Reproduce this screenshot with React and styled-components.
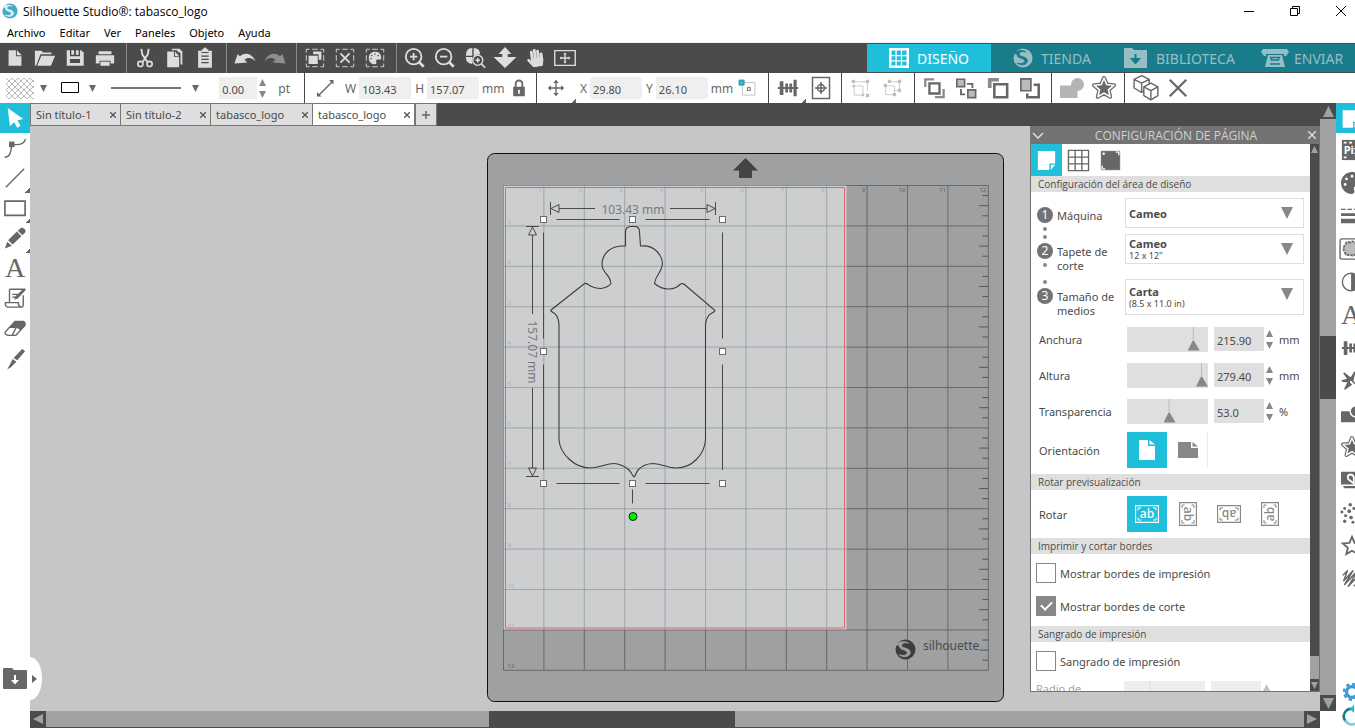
import styled, { createGlobalStyle } from "styled-components";
import { FaHandPaper, FaPalette } from "react-icons/fa";

const GlobalStyle = createGlobalStyle`
  * {
    box-sizing: border-box;
  }
  body {
    margin: 0;
    overflow: hidden;
    background: #fff;
    color: #4a4b4a;
    font-family: "Noto Sans", "Open Sans", sans-serif;
    font-size: 11px;
  }
  button, input, select {
    font: inherit;
    color: inherit;
    border: 0;
    border-radius: 0;
    margin: 0;
    padding: 0;
    background: none;
  }
  svg {
    display: block;
    flex: none;
  }
`;

/* ---------- icons ---------- */

const line = { fill: "none", stroke: "currentColor", strokeWidth: 1.5 };
const thin = { fill: "none", stroke: "currentColor", strokeWidth: 1 };
const dashBox = (
  <path d="M2.5 6V2.5H6M9 2.5h6M18 2.5h3.5V6M21.5 9v6M21.5 18v3.5H18M15 21.5H9M6 21.5H2.5V18M2.5 15V9" {...thin} />
);
const starPath = "M12 2l2.8 6.6 7.2.6-5.5 4.7 1.7 7L12 17.2l-6.2 3.7 1.7-7L2 9.2l7.2-.6z";

const ICONS = {
  file: <path d="M5 3.500h8V10h6v10.500H5zM14 3.500l5.500 5.500H14z" />,
  folder: <path d="M1 20.500V4h7l2 2h9v2H7L2.500 20zM8 9.500H23L18.500 20.500H3.500z" />,
  save: <path d="M3 3.500h3.500v6.500h11V3.500h1L21.500 6v14.500H3zM8 3.500h8v5h-3v-5h-2v5H8zM6.500 13v4.500h11V13z" fillRule="evenodd" />,
  print: (
    <>
      <path d="M5 4.500h14v3.500H5zM2 9h20v9h-4v-3H6v3H2z" />
      <path d="M7 16h10v4.500H7z" />
    </>
  ),
  cut: (
    <>
      <path d="M8 2l1 6 6 9M16 2l-1 6-6 9" {...line} strokeWidth="2" />
      <circle cx="7" cy="18.500" r="2.800" {...line} strokeWidth="1.800" />
      <circle cx="17" cy="18.500" r="2.800" {...line} strokeWidth="1.800" />
    </>
  ),
  copy: (
    <>
      <path d="M8.500 2H17l3 3v14h-2V6h-2l-2-2.500H8.500z" />
      <path d="M3.500 5h7.500v6h5.500v11h-13zM12 5l4.500 5H12z" />
    </>
  ),
  paste: (
    <>
      <path d="M4.500 4h4V2.500H10a2 2 0 0 1 4 0h1.500V4h4v18.500h-15z" />
      <path d="M8 6h8M8 10h8M8 13.500h8M8 17h8" fill="none" stroke="#4a4b4a" strokeWidth="1.300" />
    </>
  ),
  undo: <path d="M.5 18L4 7.500l2.500 2.500C12 5 20 7 23.500 15.500 19 11 14.500 11.500 11.500 14l3 3z" />,
  redo: <path d="M23.500 18L20 7.500l-2.500 2.500C12 5 4 7 .5 15.500 5 11 9.500 11.500 12.500 14l-3 3z" />,
  selectAll: (
    <>
      {dashBox}
      <path d="M10 5h9v9h-3V8h-6zM5 9.500h10v9H5z" />
    </>
  ),
  deselect: (
    <>
      {dashBox}
      <path d="M7 7l10 10M17 7L7 17" {...line} strokeWidth="2" />
    </>
  ),
  colorSelect: (
    <>
      {dashBox}
      <g transform="translate(5 5)">
        <FaPalette size={14} />
      </g>
    </>
  ),
  zoomIn: (
    <>
      <circle cx="10.500" cy="10.500" r="8.500" {...line} strokeWidth="2" />
      <path d="M6.500 10.500h8M10.500 6.500v8" {...line} strokeWidth="2" />
      <path d="M16.500 16.500l5 5" {...line} strokeWidth="3" />
    </>
  ),
  zoomOut: (
    <>
      <circle cx="10.500" cy="10.500" r="8.500" {...line} strokeWidth="2" />
      <path d="M6.500 10.500h8" {...line} strokeWidth="2" />
      <path d="M16.500 16.500l5 5" {...line} strokeWidth="3" />
    </>
  ),
  zoomArea: (
    <>
      <path d="M9 1v8.500H2Q2 1 9 1zM10.500 1q7 0 7 7-5 0-7 2zM2 11h7v7.500Q2 18 2 11z" />
      <circle cx="15" cy="14.500" r="5.500" {...line} />
      <path d="M12.500 14.500h5M15 12v5M19 18.500l4 4" {...line} strokeWidth="1.800" />
    </>
  ),
  zoomDrag: <path d="M12 0l7 7.500h-4V11h9.500L12 23-.5 11H9V7.500H5z" />,
  hand: (
    <g transform="translate(2 2) rotate(-8 10 10)">
      <FaHandPaper size={20} />
    </g>
  ),
  fit: (
    <>
      <path d="M.8 4h22.400v16H.8z" {...line} />
      <path d="M12 7v10M7 12h10" {...line} />
      <path d="M12 6l2 2h-4zM12 18l2-2h-4zM6 12l2-2v4zM18 12l-2-2v4z" />
    </>
  ),
  grid: (
    <>
      <path d="M1.500 1.500h21v21h-21z" {...line} strokeWidth="3" />
      <path d="M2 9h20M2 15.500h20M8.500 2v20M15 2v20" {...line} />
    </>
  ),
  library: (
    <>
      <path d="M0 2h8l2 2h13v18H0z" />
      <path d="M11.500 8v8M8 13l3.500 4 3.500-4z" fill="#187c8b" stroke="#187c8b" strokeWidth="2" />
    </>
  ),
  cutter: (
    <>
      <path d="M1 3h24l2 3-3 4h-2V8H4v2H2L-1 6z" />
      <path d="M6 9h14l3 12H3z" />
      <path d="M8.500 11.500h9l-1 2.500h-7zM8 18h10" fill="none" stroke="#187c8b" strokeWidth="1.300" />
    </>
  ),
  lineArrow: (
    <>
      <path d="M5 20L20 5" {...line} />
      <path d="M20.500 4v4.500l-4.500-4.500zM4 20.500V16l4.500 4.500z" />
    </>
  ),
  lock: (
    <>
      <path d="M8 11V7a4 4 0 0 1 8 0v4" {...line} strokeWidth="2.200" />
      <path d="M5 10.500h14V22H5zM11 14v5h2v-5z" fillRule="evenodd" />
    </>
  ),
  move: (
    <>
      <path d="M12 5v14M5 12h14" {...line} />
      <path d="M12 3l3 3.500H9zM12 21l3-3.500H9zM3 12l3.500-3v6zM21 12l-3.500-3v6z" />
    </>
  ),
  anchor: (
    <>
      <path d="M6.500 5.500h15v15h-15zM12.500 11.500h3.500v3.500h-3.500z" {...thin} stroke="#bbb" />
      <path d="M12.500 11.500h3.500v3.500h-3.500z" {...thin} />
      <path d="M2.500 2.500h6v6h-6z" fill="#1fbfdc" stroke="#34798a" />
    </>
  ),
  align: <path d="M1 11h22v2H1zM3 4.500h4v15H3zM9 7h3v10H9zM13.500 7h3v10h-3zM18 3h3.500v18H18z" />,
  centerPage: (
    <>
      <path d="M3.500 1.500h17v21h-17z" {...line} />
      <circle cx="12" cy="12" r="3.500" {...line} />
      <path d="M12 6v12M6 12h12" {...line} />
    </>
  ),
  group: (
    <>
      <path d="M5 9.500h10.500v11H5zM5 4.500h16v11" {...thin} strokeDasharray="none" />
      <path d="M2 2h4v4H2zM19 2h4v4h-4zM3 8h3v3H3zM14 19h3v3h-3zM19 19h4v4h-4z" />
    </>
  ),
  ungroup: (
    <>
      <path d="M4.500 9.500H15V20H4.500zM9 4.500h12V15h-6" {...thin} />
      <path d="M7 2h4v4H7zM19 2h4v4h-4zM2 7h4v4H2zM13 18h4v4h-4zM19 13h4v4h-4z" />
    </>
  ),
  toFront: (
    <>
      <path d="M2.500 11V2.500H12M13 22h9.500v-9" fill="none" stroke="#8a8b8a" strokeWidth="2.500" />
      <path d="M7 7h11v11H7z" fill="#fff" stroke="currentColor" strokeWidth="2.500" />
    </>
  ),
  forward: (
    <>
      <path d="M2 2.500h8.500v8H2zM14 14h8.500v8.500H14z" fill="#bbb" stroke="currentColor" strokeWidth="1.800" />
      <path d="M13 7.500h6V12M6.500 13v6h4.500" {...line} strokeWidth="2" />
    </>
  ),
  backward: (
    <>
      <path d="M3 12V3h10" fill="none" stroke="#8a8b8a" strokeWidth="4" />
      <path d="M8 8h14v14H8z" fill="#fff" stroke="currentColor" strokeWidth="2.800" />
    </>
  ),
  toBack: (
    <>
      <path d="M2 2h11v13H2z" fill="#bbb" stroke="currentColor" strokeWidth="1.800" />
      <path d="M16 8.500h5.500v13.500H9V18" {...line} strokeWidth="2.800" />
    </>
  ),
  weld: (
    <g fill="#b4b4b4">
      <circle cx="17.500" cy="8.500" r="6.500" />
      <path d="M0 9.500h17.500V22H0z" />
    </g>
  ),
  star: (
    <>
      <path d={starPath} {...thin} strokeWidth="4" strokeLinejoin="round" />
      <path d={starPath} fill="#fff" stroke="#fff" strokeWidth="1.500" strokeLinejoin="round" />
      <path d="M12 4l2.200 5.300 5.800.5-4.400 3.800 1.300 5.600-4.900-3-4.900 3 1.300-5.600L4 9.800l5.800-.5z" />
    </>
  ),
  starOutline: <path d={starPath} {...line} strokeWidth="2" />,
  boxes: (
    <g {...thin} strokeWidth="1.300" strokeLinejoin="round">
      <path d="M8 .5l7 3.500v8l-7 4-7-4V4zM1 4l7 3.500L15 4M8 7.500V16" />
      <path d="M16.500 7.500l6.500 3.500v8l-6.500 4-6.500-4v-8z" fill="#fff" />
      <path d="M10 11l6.500 3.500L23 11M16.500 14.500V23" />
    </g>
  ),
  close: <path d="M3 3l18 18M21 3L3 21" {...line} strokeWidth="2.500" />,
  pointer: <path d="M4 1l17 12-6.500 1.500 3.500 6-3.500 2L11 16.500 6.500 21z" />,
  curve: (
    <>
      <path d="M.5 22c6 0 7-5 8-14 8 1 14-1 15-6" {...line} />
      <path d="M5.500 5h6v6h-6z" />
    </>
  ),
  drawLine: <path d="M2 22L22 2" {...line} />,
  rect: <path d="M1 4.500h22v15.500H1z" {...line} strokeWidth="1.800" />,
  pencil: <path d="M15 4l4-3.500q5 1 4.500 5L20 9zM14 5l5 5L9.500 19l-5-4.500zM3.500 16l5 4.500-7.500 3z" />,
  sketch: (
    <>
      <path d="M6 2.500h15M6 2.500v14M21 9v10q0 3-2 3H4q-3-1-2.500-5h14q0 4 3 5M9 8h6M9 11h3" {...line} />
      <path d="M22 1l2 2-9 9.500-4 1.500 1.500-4z" />
    </>
  ),
  eraser: (
    <>
      <path d="M1.500 16L12 5h8q4 1 2 5l-9 10H5q-5-1-3.500-4z" {...line} />
      <path d="M12 4h9q4 1 2 6l-5.500 5q-1-3-5-3H5z" />
      <path d="M13 12l-4 8" {...line} />
    </>
  ),
  knife: <path d="M20 2l3 2.500-8.500 10L10.500 12zM9.500 13l4 3-6 6-4 2.500z" />,
  download: (
    <>
      <path d="M0 3q0-1 1-1h8l2 2h12q1 0 1 1v17q0 1-1 1H1q-1 0-1-1z" />
      <path d="M11 9h2v5h3l-4 4.500L8 14h3z" fill="#fff" />
    </>
  ),
  page: (
    <>
      <path d="M3 2h18v13h-6v7H3z" />
      <path d="M16.500 22v-5.500H21z" />
    </>
  ),
  gridSmall: <path d="M1.500 1.500h21v21h-21zM1.500 8.500h21M1.500 15.500h21M8.500 1.500v21M15.500 1.500v21" {...thin} strokeWidth="1.400" />,
  marks: (
    <>
      <path d="M1.500 1.500h21v21h-21z" stroke="currentColor" />
      <path d="M3 3h2.500v2.500H3z" fill="#fff" />
      <path d="M18 2.500h3.500V6M2.500 18v3.500H6" fill="none" stroke="#fff" strokeWidth="1.500" />
    </>
  ),
  pix: (
    <>
      <path d="M1 1h24v22H1z" />
      <path d="M3 3h3v2H3zM3 19h3v2H3zM9 3h3v2H9z" fill="#fff" />
      <text x="3" y="16" fill="#fff" fontSize="12" fontWeight="700">Pix</text>
    </>
  ),
  palette: <FaPalette size={24} />,
  lines: <path d="M0 4h5v1.500H0zM7 4h5v1.500H7zM14 4h5v1.500h-5zM0 9h24v3H0zM0 15h24v5H0z" />,
  flower: (
    <>
      <path d="M26 1H1q-2 0-2 2v18q0 2 2 2h25" {...line} />
      <path d="M5 7q1-4 5-2 3-3 6 1 5 0 3 5 2 5-3 6-3 4-6 1-5 2-6-3-3-4 1-8z" fill="#bbb" stroke="currentColor" strokeWidth="2" strokeDasharray="3 1" />
    </>
  ),
  contrast: (
    <>
      <circle cx="11" cy="12" r="9.500" {...line} />
      <path d="M11 2.500a9.500 9.500 0 0 1 0 19z" />
    </>
  ),
  tools: <path d="M3 3l9 7-3 2zM1 12l7-2 1 3zM4 21l4-8 3 3zM15 2l-2 9-2-2zM8 8l14 13" stroke="currentColor" strokeWidth="1.500" />,
  boolean: (
    <>
      <path d="M0 9h22v12H0z" />
      <circle cx="16" cy="9" r="6" fill="#666766" stroke="#fff" strokeWidth="1.500" />
    </>
  ),
  heart: (
    <>
      <path d="M0 3h24v14H0zM2 18.500h22V21H4z" />
      <path d="M14 16l-6-5q-2-4 2-5 3 0 4 3z" fill="none" stroke="#fff" strokeWidth="2" />
    </>
  ),
  dots: (
    <g>
      <circle cx="10" cy="3" r="2" />
      <circle cx="4" cy="7" r="1.600" />
      <circle cx="1" cy="11" r="1.600" />
      <circle cx="9" cy="10" r="2" />
      <circle cx="14" cy="7" r="1.600" />
      <circle cx="5" cy="15" r="1.600" />
      <circle cx="11" cy="17" r="2" />
      <circle cx="4" cy="21" r="1.800" />
      <circle cx="13" cy="22" r="1.600" />
    </g>
  ),
  hatch: <path d="M2 8l5-5L3 14 13 3 4 18 18 3 8 20 22 5M14 20l9-10" {...line} strokeWidth="1.600" strokeLinejoin="round" />,
  gear: (
    <>
      <circle cx="12" cy="12" r="6.500" fill="none" stroke="#3a9bd8" strokeWidth="4" />
      <circle cx="12" cy="12" r="9.500" fill="none" stroke="#3a9bd8" strokeWidth="3" strokeDasharray="4 3.460" />
    </>
  ),
  sync: (
    <>
      <path d="M12 3.500A9 9 0 0 0 5 19" fill="none" stroke="#187c8b" strokeWidth="3" />
      <path d="M4 17a9 9 0 0 0 15 2" fill="none" stroke="#7ccbe0" strokeWidth="3" />
      <path d="M9 3.500L14.500-1.500v10z" fill="#1fbfdc" />
    </>
  ),
  portrait: <path d="M4 2h9v6h7v14H4zM14.500 2L20 6.500h-5.500z" />,
  landscape: <path d="M2 4h13v6h7v10H2zM16.500 4L22 8.500h-5.500z" />,
};

function Icon({ name, size = 24 }) {
  return (
    <svg width={size} height={size} viewBox="0 0 24 24" fill="currentColor" overflow="visible" aria-hidden="true">
      {ICONS[name]}
    </svg>
  );
}

function SilhouetteLogo({ size = 20, color, mark }) {
  return (
    <svg width={size} height={size} viewBox="0 0 20 20" aria-hidden="true">
      <circle cx="10" cy="10" r="9.500" fill={color} />
      <path
        d="M0 6.500C3 3 8 1 13 4 9 2.500 5.500 4.500 6.500 7c1 2 7.500 1.500 8 5.500.3 4-6 6-10.500 2.500 5 1.500 8.500-.5 7.500-2.500C10 9.500 4.500 11 4 6.500 3.500 5.500 2 5.500 0 6.500z"
        fill={mark}
        stroke={mark}
        strokeWidth=".8"
      />
    </svg>
  );
}

function Triangle({ direction = "down", size = 8 }) {
  const paths = {
    down: "M0 0h8L4 8z",
    up: "M0 8h8L4 0z",
    left: "M8 0v8L0 4z",
    right: "M0 0v8l8-4z",
  };
  return (
    <svg width={size} height={size} viewBox="0 0 8 8" fill="currentColor" aria-hidden="true">
      <path d={paths[direction]} />
    </svg>
  );
}

/* ---------- window chrome ---------- */

function WindowHeader() {
  return (
    <header>
      <TitleBar>
        <SilhouetteLogo size={16} color="#45a9c8" mark="#d9f2f8" />
        <Title>Silhouette Studio®: tabasco_logo</Title>
        <WindowButton aria-label="Minimizar">
          <svg width="10" height="10" stroke="#000"><path d="M0 5.500h10" /></svg>
        </WindowButton>
        <WindowButton aria-label="Restaurar">
          <svg width="10" height="10" fill="none" stroke="#000"><path d="M.5 2.500h7v7h-7zM2.500 2.500v-2h7v7h-2" /></svg>
        </WindowButton>
        <WindowButton aria-label="Cerrar">
          <svg width="10" height="10" stroke="#000"><path d="M0 0l10 10M10 0L0 10" /></svg>
        </WindowButton>
      </TitleBar>
      <MenuBar>
        {["Archivo", "Editar", "Ver", "Paneles", "Objeto", "Ayuda"].map((item) => (
          <button key={item}>{item}</button>
        ))}
      </MenuBar>
    </header>
  );
}

const TOOL_GROUPS = [
  ["file", "folder", "save", "print"],
  ["cut", "copy", "paste"],
  ["undo", "redo"],
  ["selectAll", "deselect", "colorSelect"],
  ["zoomIn", "zoomOut", "zoomArea", "zoomDrag", "hand", "fit"],
];

function MainToolbar() {
  return (
    <Toolbar>
      {TOOL_GROUPS.map((group) => (
        <ToolGroup key={group[0]}>
          {group.map((name) => (
            <ToolButton key={name} aria-label={name} $dim={name === "redo"}>
              <Icon name={name} size={22} />
            </ToolButton>
          ))}
        </ToolGroup>
      ))}
      <Nav>
        <NavLink href="#diseno" $width={124} $active>
          <Icon name="grid" size={20} />
          DISEÑO
        </NavLink>
        <NavLink href="#tienda" $width={111}>
          <SilhouetteLogo color="#98bec5" mark="#187c8b" />
          TIENDA
        </NavLink>
        <NavLink href="#biblioteca" $width={138}>
          <Icon name="library" />
          BIBLIOTECA
        </NavLink>
        <NavLink href="#enviar" $width={115}>
          <Icon name="cutter" />
          ENVIAR
        </NavLink>
      </Nav>
    </Toolbar>
  );
}

function Spinner() {
  return (
    <SpinnerBox>
      <button aria-label="Aumentar"><Triangle direction="up" size={7} /></button>
      <button aria-label="Reducir"><Triangle size={7} /></button>
    </SpinnerBox>
  );
}

function OptionsBar() {
  return (
    <Options>
      <OptionGroup $width={305} $gap={6}>
        <OptionButton aria-label="Relleno">
          <svg width="28" height="21" viewBox="0 0 28 21">
            <defs>
              <pattern id="mesh" width="6" height="6" patternUnits="userSpaceOnUse">
                <path d="M0 0l6 6M6 0L0 6" stroke="#aaa" strokeWidth=".8" />
              </pattern>
            </defs>
            <rect width="28" height="21" fill="url(#mesh)" />
          </svg>
          <Triangle size={7} />
        </OptionButton>
        <OptionButton aria-label="Color de línea">
          <svg width="30" height="12" fill="none" stroke="#000"><path d="M8.500.5h17v10h-17z" /></svg>
          <Triangle size={7} />
        </OptionButton>
        <OptionButton aria-label="Estilo de línea">
          <svg width="84" height="2"><path d="M9 0h70v2H9z" fill="#777" /></svg>
          <Triangle size={7} />
        </OptionButton>
        <Push />
        <InputGroup>
          <NumberInput aria-label="Grosor" defaultValue="0.00" $width={38} />
          <Spinner />
        </InputGroup>
        <Unit>pt</Unit>
      </OptionGroup>
      <OptionGroup $width={232} $gap={4}>
        <OptionButton aria-label="Escala"><Icon name="lineArrow" /></OptionButton>
        <Corner />
        <Field>
          W
          <NumberInput defaultValue="103.43" $width={52} />
        </Field>
        <Field>
          H
          <NumberInput defaultValue="157.07" $width={52} />
          mm
        </Field>
        <OptionButton aria-label="Bloquear proporción"><Icon name="lock" size={20} /></OptionButton>
      </OptionGroup>
      <OptionGroup $width={232} $gap={4}>
        <OptionButton aria-label="Mover"><Icon name="move" size={22} /></OptionButton>
        <Corner />
        <Field>
          X
          <NumberInput defaultValue="29.80" $width={52} />
        </Field>
        <Field>
          Y
          <NumberInput defaultValue="26.10" $width={52} />
          mm
        </Field>
        <OptionButton aria-label="Punto de anclaje"><Icon name="anchor" size={20} /></OptionButton>
      </OptionGroup>
      <OptionGroup $width={73} $gap={3}>
        <OptionButton aria-label="Alinear"><Icon name="align" size={22} /></OptionButton>
        <Corner />
        <OptionButton aria-label="Centrar"><Icon name="centerPage" /></OptionButton>
      </OptionGroup>
      <OptionGroup $width={73} $gap={12} $dim>
        <OptionButton aria-label="Agrupar"><Icon name="group" size={20} /></OptionButton>
        <OptionButton aria-label="Desagrupar"><Icon name="ungroup" size={20} /></OptionButton>
      </OptionGroup>
      <OptionGroup $width={137} $gap={10}>
        {["toFront", "forward", "backward", "toBack"].map((name) => (
          <OptionButton key={name} aria-label={name}><Icon name={name} size={22} /></OptionButton>
        ))}
      </OptionGroup>
      <OptionGroup $width={73} $gap={8}>
        <OptionButton aria-label="Soldar"><Icon name="weld" /></OptionButton>
        <OptionButton aria-label="Desplazar"><Icon name="star" /></OptionButton>
      </OptionGroup>
      <OptionGroup $width={70} $gap={8} $last>
        <OptionButton aria-label="Duplicar"><Icon name="boxes" size={26} /></OptionButton>
        <OptionButton aria-label="Eliminar"><Icon name="close" size={22} /></OptionButton>
      </OptionGroup>
    </Options>
  );
}

const LEFT_TOOLS = ["pointer", "curve", "drawLine", "rect", "pencil", "text", "sketch", "eraser", "knife"];
const WITH_CORNER = ["drawLine", "rect", "pencil"];

function LeftTools() {
  return (
    <Sidebar>
      {LEFT_TOOLS.map((name) => (
        <SideButton key={name} aria-label={name} $active={name === "pointer"}>
          {name === "text" ? <Letter>A</Letter> : <Icon name={name} size={22} />}
          {WITH_CORNER.includes(name) && <SideCorner />}
        </SideButton>
      ))}
      <LibraryButton aria-label="Biblioteca">
        <Icon name="download" />
      </LibraryButton>
      <PullTab aria-label="Abrir biblioteca">
        <svg width="5" height="8" viewBox="0 0 5 8" fill="currentColor"><path d="M0 0v8l5-4z" /></svg>
      </PullTab>
    </Sidebar>
  );
}

const RIGHT_TOOLS = [
  "pix", "palette", "lines", "flower", "contrast", "text", "align",
  "tools", "boolean", "star", "heart", "dots", "starOutline", "hatch",
];

function RightTools() {
  return (
    <RightBar>
      <RightPage aria-label="Página"><Icon name="page" /></RightPage>
      {RIGHT_TOOLS.map((name) => (
        <RightButton key={name} aria-label={name}>
          {name === "text" ? <Letter>A</Letter> : <Icon name={name} size={22} />}
        </RightButton>
      ))}
      <Push />
      <FooterButton aria-label="Preferencias"><Icon name="gear" size={20} /></FooterButton>
      <FooterButton aria-label="Sincronizar"><Icon name="sync" size={20} /></FooterButton>
    </RightBar>
  );
}

/* ---------- cutting mat ---------- */

const STEP = 40.4;
const INCHES = Array.from({ length: 13 }, (_, i) => i);
const HANDLES = [
  [543, 219], [632, 219], [722, 219],
  [543, 351], [722, 351],
  [543, 483], [632, 483], [722, 483],
];

function CuttingMat() {
  const end = 12 * STEP;
  return (
    <svg width="517" height="549" viewBox="487 153 517 549" fontFamily="Noto Sans, sans-serif">
      <rect x="487.500" y="153.500" width="516" height="548" rx="7" fill="#9fa0a1" stroke="#111" />
      <path d="M745.500 158l12.500 12.500h-6V178h-13v-7.500h-6z" fill="#434443" />
      <g transform="translate(503.500 185.500)">
        <g stroke="#66686a">
          {INCHES.map((i) => (
            <path key={i} d={`M${i * STEP} 0v${end}M0 ${i * STEP}h${end}`} />
          ))}
        </g>
        <g stroke="#555657">
          {Array.from({ length: 48 }, (_, i) => i)
            .filter((i) => i % 4)
            .map((i) => (
              <path key={i} d={`M${end} ${i * STEP / 4}h${i % 2 ? -6 : -9}`} />
            ))}
        </g>
        <rect width="343" height="444" fill="#d2d3d5" opacity=".9" />
        <g stroke="#8b8d8e" strokeOpacity=".6">
          {INCHES.slice(0, 9).map((i) => (
            <path key={i} d={`M${i * STEP} 0v444`} />
          ))}
          {INCHES.slice(0, 11).map((i) => (
            <path key={i} d={`M0 ${i * STEP}h343`} />
          ))}
        </g>
        <path d="M2 2h339v440.500H2z" fill="none" stroke="#e8646a" />
        <g fontSize="6">
          {INCHES.slice(1).map((i) => (
            <text key={i} x={i * STEP - 2} y="6" textAnchor="end" fill={i > 8 ? "#616263" : "#adafb0"}>{i}</text>
          ))}
          {INCHES.slice(1).map((i) => (
            <text key={i} x="4" y={i * STEP - 2} fill={i > 11 ? "#616263" : "#adafb0"}>{i}</text>
          ))}
        </g>
      </g>

      <path
        d="M625.500 246V232q0-5 5-5.500h5q4 .5 4 5.500l1 14q10-1 16 5t6 13q-1 6-4 10-3 4-4 9.500 7 6 15 5.500 6 0 11-5 2-1 4 .500L715 310.500q0 1-3 2.500-6 3-6.500 12V440c-1 14-13 28-29 28-9 0-14-4-23-4.500-6 0-12 3-15 6-3 3-3 7-4.500 7.500-1.500-.5-2-4-5-7-4-4-11-6.500-15-6.500-8 0-14 4.500-24 4.500-15 0-30-14-31-28V325q-.5-9-5-12-4-2-3-3L584 284q2-1.500 4 .5 6 4 13 4 7-1 10-5-1-6-5-10-4-5-4-9 0-8 6-13.500t17.500-5z"
        fill="none"
        stroke="#3b3c3d"
        strokeWidth="1.100"
      />

      <g fill="none" stroke="#48494a">
        <path d="M556.500 219.500h63M645.500 219.500h64M556.500 483.500h63M645.500 483.500h64M543.500 232.500v106M543.500 364.500v105.500M722.500 232.500v106M722.500 364.500v105.500M632.500 489.500v14" />
        <path d="M550.500 202v13M715.500 202v13M559 208.500h36M670 208.500h37M551 208.500l8-4v8zM715 208.500l-8-4v8z" />
        <path d="M526 226.500h13M526 476.500h13M532.500 235v79M532.500 388v80M532.500 227l-4 8h8zM532.500 476l-4-8h8z" />
      </g>
      <g fill="#fff" stroke="#6c6d6d">
        {HANDLES.map(([x, y]) => (
          <rect key={`${x}-${y}`} x={x - 2.500} y={y - 2.500} width="6" height="6" />
        ))}
      </g>
      <circle cx="633" cy="516.500" r="4" fill="#00f000" stroke="#1c1c1c" />
      <g fontSize="12" fill="#77797a" textAnchor="middle">
        <text x="633" y="214">103.43 mm</text>
        <text transform="translate(528 352) rotate(90)">157.07 mm</text>
      </g>

      <g transform="translate(895 639)">
        <SilhouetteLogo size={21} color="#3c3d3d" mark="#9fa0a1" />
      </g>
      <text x="923" y="650" fontSize="12" fill="#4a4b4b">silhouette</text>
    </svg>
  );
}

const TABS = ["Sin título-1", "Sin título-2", "tabasco_logo", "tabasco_logo"];

function DocumentTabs() {
  return (
    <TabBar>
      {TABS.map((title, i) => (
        <Tab key={i} $active={i === 3} $wide={i > 1}>
          <button>{title}</button>
          <TabClose aria-label="Cerrar pestaña">
            <svg width="6" height="6" stroke="#555" strokeWidth="1.300"><path d="M0 0l6 6M6 0L0 6" /></svg>
          </TabClose>
        </Tab>
      ))}
      <NewTab aria-label="Nueva pestaña">
        <svg width="8" height="8" stroke="#666" strokeWidth="1.500"><path d="M0 4h8M4 0v8" /></svg>
      </NewTab>
    </TabBar>
  );
}

/* ---------- page setup panel ---------- */

const MEDIA = [
  { step: 1, label: "Máquina", value: "Cameo", height: 30 },
  { step: 2, label: "Tapete de corte", value: "Cameo", note: '12 x 12"', height: 30 },
  { step: 3, label: "Tamaño de medios", value: "Carta", note: "(8.5 x 11.0 in)", height: 36 },
];

const SLIDERS = [
  { id: "anchura", label: "Anchura", value: 88, number: "215.90", unit: "mm" },
  { id: "altura", label: "Altura", value: 100, number: "279.40", unit: "mm" },
  { id: "transparencia", label: "Transparencia", value: 53, number: "53.0", unit: "%" },
];

function RotateIcon({ angle, tall }) {
  const w = tall ? 18 : 24;
  const h = tall ? 24 : 18;
  return (
    <svg width={w} height={h} viewBox={`${-w / 2} ${-h / 2} ${w} ${h}`} aria-hidden="true">
      <g transform={`rotate(${angle})`} fill="none" stroke="currentColor">
        <path d="M-11.500-8.500h23v17h-23z" strokeWidth="1.300" />
        <path d="M-9-3.500v-2.500h3M9-3.500v-2.500H6M-9 3.500v2.500h3M9 3.500v2.500H6" />
        <text y="4" fontSize="12" fontWeight="500" textAnchor="middle" fill="currentColor" stroke="none">ab</text>
      </g>
    </svg>
  );
}

function CheckRow({ id, label, checked }) {
  return (
    <CheckLine>
      <Checkbox id={id} type="checkbox" defaultChecked={checked} />
      <label htmlFor={id}>{label}</label>
    </CheckLine>
  );
}

function PagePanel() {
  return (
    <Panel>
      <PanelHeader>
        <button aria-label="Contraer">
          <svg width="12" height="7" fill="none" stroke="#ddd" strokeWidth="1.500"><path d="M1 1l5 5 5-5" /></svg>
        </button>
        <PanelTitle>CONFIGURACIÓN DE PÁGINA</PanelTitle>
        <button aria-label="Cerrar panel">
          <svg width="8" height="8" stroke="#ddd" strokeWidth="1.300"><path d="M0 0l8 8M8 0L0 8" /></svg>
        </button>
      </PanelHeader>
      <PanelBody>
        <PanelContent>
          <PanelTabs>
            <PanelTab aria-label="Página" $active><Icon name="page" size={23} /></PanelTab>
            <PanelTab aria-label="Cuadrícula"><Icon name="gridSmall" size={23} /></PanelTab>
            <PanelTab aria-label="Marcas de registro"><Icon name="marks" size={21} /></PanelTab>
          </PanelTabs>

          <SectionTitle>Configuración del área de diseño</SectionTitle>
          <MediaList>
            {MEDIA.map(({ step, label, value, note, height }) => (
              <MediaRow key={step}>
                <Step>{step}</Step>
                <MediaLabel htmlFor={`media-${step}`}>{label}</MediaLabel>
                <SelectBox $height={height}>
                  <Select id={`media-${step}`} $withNote={Boolean(note)}>
                    <option>{value}</option>
                  </Select>
                  {note && <Note>{note}</Note>}
                  <SelectArrow><Triangle size={12} /></SelectArrow>
                </SelectBox>
              </MediaRow>
            ))}
          </MediaList>

          {SLIDERS.map(({ id, label, value, number, unit }) => (
            <FormRow key={id}>
              <RowLabel as="label" htmlFor={id}>{label}</RowLabel>
              <Slider id={id} type="range" defaultValue={value} />
              <InputGroup>
                <ValueInput aria-label={`${label} (${unit})`} defaultValue={number} />
                <Spinner />
              </InputGroup>
              <span>{unit}</span>
            </FormRow>
          ))}
          <ButtonRow $compact>
            <RowLabel>Orientación</RowLabel>
            <Toggle aria-label="Vertical" $active><Icon name="portrait" /></Toggle>
            <Toggle aria-label="Horizontal" $edge><Icon name="landscape" /></Toggle>
          </ButtonRow>

          <SectionTitle>Rotar previsualización</SectionTitle>
          <ButtonRow>
            <RowLabel>Rotar</RowLabel>
            <Toggle aria-label="0 grados" $active><RotateIcon angle={0} /></Toggle>
            <Toggle aria-label="90 grados"><RotateIcon angle={90} tall /></Toggle>
            <Toggle aria-label="180 grados"><RotateIcon angle={180} /></Toggle>
            <Toggle aria-label="270 grados"><RotateIcon angle={-90} tall /></Toggle>
          </ButtonRow>

          <SectionTitle>Imprimir y cortar bordes</SectionTitle>
          <CheckList>
            <CheckRow id="print-borders" label="Mostrar bordes de impresión" />
            <CheckRow id="cut-borders" label="Mostrar bordes de corte" checked />
          </CheckList>

          <SectionTitle>Sangrado de impresión</SectionTitle>
          <CheckList>
            <CheckRow id="bleed" label="Sangrado de impresión" />
          </CheckList>
          <DisabledRow>
            <RowLabel as="label" htmlFor="radius">Radio de</RowLabel>
            <Slider id="radius" type="range" defaultValue="30" disabled />
            <InputGroup>
              <ValueInput aria-label="Radio" disabled />
              <Spinner />
            </InputGroup>
          </DisabledRow>
        </PanelContent>
        <PanelScroll>
          <Triangle direction="up" size={7} />
          <PanelThumb />
          <Triangle size={7} />
        </PanelScroll>
      </PanelBody>
    </Panel>
  );
}

export default function App() {
  return (
    <Window>
      <GlobalStyle />
      <WindowHeader />
      <MainToolbar />
      <OptionsBar />
      <Main>
        <LeftTools />
        <Document>
          <Upper>
            <Editor>
              <DocumentTabs />
              <Workspace>
                <Canvas>
                  <CuttingMat />
                </Canvas>
                <PagePanel />
              </Workspace>
            </Editor>
            <VScroll>
              <ScrollArrow><Triangle direction="up" size={11} /></ScrollArrow>
              <VTrack><VThumb /></VTrack>
              <ScrollArrow><Triangle size={11} /></ScrollArrow>
            </VScroll>
          </Upper>
          <HScroll>
            <ScrollArrow><Triangle direction="left" size={10} /></ScrollArrow>
            <HTrack><HThumb /></HTrack>
            <ScrollArrow><Triangle direction="right" size={10} /></ScrollArrow>
          </HScroll>
        </Document>
        <RightTools />
      </Main>
    </Window>
  );
}

/* ---------- styles ---------- */

const Window = styled.div`
  display: flex;
  flex-direction: column;
  height: 100vh;
`;

const TitleBar = styled.div`
  display: flex;
  align-items: center;
  height: 22px;
  padding-left: 2px;
  color: #000;
`;

const Title = styled.span`
  flex: 1;
  padding-left: 5px;
  font-family: "Open Sans", sans-serif;
  font-size: 12px;
`;

const WindowButton = styled.button`
  display: flex;
  align-items: center;
  justify-content: center;
  width: 46px;
  height: 22px;

  &:last-child {
    justify-content: flex-end;
    width: 37px;
    padding-right: 9px;
  }
`;

const MenuBar = styled.nav`
  display: flex;
  gap: 14px;
  height: 21px;
  padding-left: 7px;
  border-bottom: 1px solid #f0f0f0;
  color: #000;
`;

const Toolbar = styled.div`
  display: flex;
  height: 30px;
  background: #4a4b4a;
  color: #dcdddc;
`;

const ToolGroup = styled.div`
  display: flex;
  padding-right: 6px;

  & + & {
    padding-left: 4px;
    box-shadow: inset 1px 0 #8a8b8a;
  }
`;

const ToolButton = styled.button`
  display: flex;
  align-items: center;
  justify-content: center;
  width: 30px;
  height: 30px;
  color: ${({ $dim }) => ($dim ? "#8d8e8d" : "inherit")};
`;

const Nav = styled.nav`
  display: flex;
  margin-left: auto;
  padding: 1px 0;
`;

const NavLink = styled.a`
  display: flex;
  align-items: center;
  gap: 8px;
  width: ${({ $width }) => $width}px;
  padding-left: 22px;
  background: ${({ $active }) => ($active ? "#1fbfdc" : "#187c8b")};
  color: ${({ $active }) => ($active ? "#fff" : "#98bec5")};
  font-size: 14px;
  text-decoration: none;
`;

const Options = styled.div`
  display: flex;
  height: 30px;
  background: #fff;
`;

const OptionGroup = styled.div`
  display: flex;
  align-items: center;
  gap: ${({ $gap }) => $gap}px;
  width: ${({ $width }) => $width}px;
  padding: 0 8px;
  border-right: ${({ $last }) => ($last ? "0" : "1px solid #4a4b4a")};
  color: ${({ $dim }) => ($dim ? "#c0c0c0" : "#666766")};
  font-size: 12px;

  &:first-child {
    padding-left: 6px;
  }
`;

const OptionButton = styled.button`
  display: flex;
  align-items: center;
  gap: 6px;
`;

const Push = styled.span`
  flex: 1;
`;

const Field = styled.label`
  display: flex;
  align-items: center;
  gap: 3px;
`;

const InputGroup = styled.span`
  display: flex;
  align-items: center;
  gap: 2px;
`;

const NumberInput = styled.input`
  width: ${({ $width }) => $width}px;
  height: 22px;
  padding: 3px 0 0 3px;
  background: #efefef;
  color: #4a4b4a;
  font-size: 11px;
`;

const Unit = styled.span`
  padding: 0 6px;
`;

const SpinnerBox = styled.span`
  display: flex;
  flex-direction: column;
  gap: 5px;
  color: #868786;
`;

const Corner = styled.span`
  align-self: flex-end;
  width: 5px;
  height: 5px;
  background: linear-gradient(135deg, transparent 50%, #666766 50%);
`;

const Main = styled.main`
  display: flex;
  flex: 1;
  min-height: 0;
`;

const Sidebar = styled.aside`
  position: relative;
  display: flex;
  flex-direction: column;
  width: 30px;
  background: #fff;
`;

const SideButton = styled.button`
  position: relative;
  display: flex;
  align-items: center;
  justify-content: center;
  width: 30px;
  height: 30px;
  background: ${({ $active }) => ($active ? "#1fbfdc" : "none")};
  color: ${({ $active }) => ($active ? "#fff" : "#666766")};
`;

const SideCorner = styled(Corner)`
  position: absolute;
  right: 0;
  bottom: 0;
`;

const Letter = styled.span`
  font-family: "Liberation Serif", serif;
  font-size: 28px;
  line-height: 30px;
`;

const LibraryButton = styled.button`
  margin: auto 0 38px 3px;
  color: #666766;
`;

const PullTab = styled.button`
  position: absolute;
  bottom: 28px;
  left: 30px;
  z-index: 1;
  width: 12px;
  height: 43px;
  border-radius: 0 12px 12px 0 / 0 22px 22px 0;
  padding-left: 2px;
  background: #fff;
  color: #666766;
`;

const Document = styled.div`
  display: flex;
  flex: 1;
  flex-direction: column;
  min-width: 0;
`;

const Upper = styled.div`
  display: flex;
  flex: 1;
  min-height: 0;
`;

const Editor = styled.div`
  display: flex;
  flex: 1;
  flex-direction: column;
  min-width: 0;
`;

const TabBar = styled.div`
  display: flex;
  height: 23px;
  background: #4a4b4a;
`;

const Tab = styled.div`
  display: flex;
  align-items: center;
  justify-content: space-between;
  width: ${({ $wide }) => ($wide ? 102 : 90)}px;
  padding: 0 4px 0 5px;
  border: 1px solid #777877;
  border-left-width: 0;
  background: ${({ $active }) => ($active ? "#fff" : "#dedede")};

  &:first-child {
    width: 91px;
    border-left-width: 1px;
  }
`;

const TabClose = styled.button`
  display: flex;
`;

const NewTab = styled.button`
  display: flex;
  align-items: center;
  justify-content: center;
  width: 22px;
  border: 1px solid #777877;
  background: #dedede;
`;

const Workspace = styled.div`
  display: flex;
  flex: 1;
  align-items: flex-start;
  min-height: 0;
  background: #c6c6c6;
`;

const Canvas = styled.div`
  display: flex;
  flex: 1;
  justify-content: flex-end;
  min-width: 0;
  padding: 27px 26px 0 0;
`;

const VScroll = styled.div`
  display: flex;
  flex-direction: column;
  width: 16px;
`;

const ScrollArrow = styled.button`
  display: flex;
  align-items: center;
  justify-content: center;
  width: 16px;
  height: 16px;
  background: #4a4b4a;
  color: #a0a1a2;
`;

const VTrack = styled.div`
  flex: 1;
  padding-top: 217px;
  background: #a0a1a2;
`;

const VThumb = styled.div`
  height: 63px;
  background: #4a4b4a;
`;

const HScroll = styled.div`
  display: flex;
  height: 17px;
  margin-right: 16px;
  border-bottom: 1px solid #4a4b4a;
  background: #a0a1a2;
`;

const HTrack = styled.div`
  flex: 1;
`;

const HThumb = styled.div`
  width: 246px;
  height: 16px;
  margin-left: 443px;
  background: #4a4b4a;
`;

const RightBar = styled.aside`
  display: flex;
  flex-direction: column;
  width: 19px;
  overflow: hidden;
  background: #fff;
`;

const RightPage = styled.button`
  height: 30px;
  padding: 2px 0 0 4px;
  background: #1fbfdc;
  color: #fff;

  svg {
    width: 21px;
  }
`;

const RightButton = styled.button`
  display: flex;
  align-items: center;
  height: 33px;
  padding-left: 5px;
  color: #666766;
`;

const FooterButton = styled.button`
  height: 24px;
  padding-left: 6px;
`;

const Panel = styled.section`
  display: flex;
  flex-direction: column;
  width: 290px;
  height: calc(100% - 19px);
  border: 1px solid #727372;
  border-top: 0;
  background: #fff;
`;

const PanelHeader = styled.header`
  display: flex;
  align-items: center;
  justify-content: space-between;
  height: 18px;
  padding: 0 3px 0 1px;
  background: #727372;
  color: #d0d0d0;
`;

const PanelTitle = styled.h2`
  margin: 0;
  font-family: "Open Sans", sans-serif;
  font-size: 12px;
  font-weight: 400;
`;

const PanelBody = styled.div`
  display: flex;
  flex: 1;
  min-height: 0;
`;

const PanelContent = styled.div`
  flex: 1;
  min-width: 0;
  overflow: hidden;
`;

const PanelScroll = styled.div`
  display: flex;
  flex-direction: column;
  align-items: center;
  width: 9px;
  padding: 2px 0;
  background: #4a4b4a;
  color: #a0a1a2;
`;

const PanelThumb = styled.div`
  width: 9px;
  height: 23px;
  margin: auto 0 3px;
  background: #a0a1a2;
`;

const PanelTabs = styled.div`
  display: flex;
  gap: 1px;
  height: 32px;
`;

const PanelTab = styled.button`
  display: flex;
  align-items: center;
  justify-content: center;
  width: 31px;
  background: ${({ $active }) => ($active ? "#1fbfdc" : "none")};
  color: ${({ $active }) => ($active ? "#fff" : "#666766")};
`;

const SectionTitle = styled.h3`
  height: 16px;
  margin: 0;
  padding-left: 7px;
  background: #dfdfdf;
  font-family: "Open Sans", sans-serif;
  font-size: 10px;
  font-weight: 400;
  line-height: 16px;
`;

const MediaList = styled.div`
  padding: 6px 6px 3px;
`;

const MediaRow = styled.div`
  display: flex;
  align-items: flex-start;
  min-height: 36px;

  & + & + & {
    margin-top: 6px;
  }
`;

const Step = styled.span`
  position: relative;
  width: 16px;
  height: 16px;
  margin-top: 9px;
  border-radius: 8px;
  background: #727372;
  color: #fff;
  font-size: 12px;
  line-height: 16px;
  text-align: center;

  /* dots that join one step to the next */
  ${MediaRow}:not(:last-child) &::after {
    content: "";
    position: absolute;
    top: 20px;
    left: 6px;
    width: 4px;
    height: 4px;
    border-radius: 2px;
    background: #888988;
    box-shadow: 0 8px #888988;
  }

  ${MediaRow}:nth-child(2) &::after {
    box-shadow: 0 17px #888988;
  }
`;

const MediaLabel = styled.label`
  width: 72px;
  padding: 11px 0 0 4px;
  line-height: 14px;
`;

const SelectBox = styled.span`
  position: relative;
  flex: 1;
  height: ${({ $height }) => $height}px;
  border: 1px solid #dfdfdf;
`;

const Select = styled.select`
  appearance: none;
  width: 100%;
  height: 100%;
  padding: 0 24px ${({ $withNote }) => ($withNote ? 12 : 0)}px 3px;
  font-weight: 700;
`;

const Note = styled.span`
  position: absolute;
  top: 14px;
  left: 3px;
  font-size: 9px;
  line-height: 14px;
  pointer-events: none;

  ${MediaRow}:last-child & {
    top: 17px;
  }
`;

const SelectArrow = styled.span`
  position: absolute;
  top: 8px;
  right: 10px;
  color: #868786;
  pointer-events: none;
`;

const FormRow = styled.div`
  display: flex;
  align-items: center;
  gap: 6px;
  height: 36px;
  padding-left: 8px;
`;

const RowLabel = styled.span`
  width: 82px;
`;

const Slider = styled.input`
  appearance: none;
  width: 81px;
  height: 25px;
  background: #dfdfdf;

  &::-webkit-slider-thumb {
    appearance: none;
    width: 12px;
    height: 25px;
    background: linear-gradient(#bbb 14px, #868786 14px);
    clip-path: polygon(5px 0, 6px 0, 6px 14px, 12px 24px, 0 24px, 5px 14px);
  }
`;

const ValueInput = styled.input`
  width: 50px;
  height: 24px;
  padding: 3px 0 0 3px;
  background: #dfdfdf;
`;

const ButtonRow = styled.div`
  display: flex;
  align-items: center;
  gap: 1px;
  height: ${({ $compact }) => ($compact ? 45 : 48)}px;
  padding: 0 0 ${({ $compact }) => ($compact ? 3 : 0)}px 8px;

  ${RowLabel} {
    width: 87px;
  }
`;

const Toggle = styled.button`
  display: flex;
  align-items: center;
  justify-content: center;
  width: 40px;
  height: 36px;
  background: ${({ $active }) => ($active ? "#1fbfdc" : "none")};
  border-right: ${({ $edge }) => ($edge ? "1px solid #d8f2f7" : "0")};
  color: ${({ $active }) => ($active ? "#fff" : "#868786")};
`;

const CheckList = styled.div`
  display: grid;
  gap: 13px;
  padding: 9px 5px 10px;
`;

const CheckLine = styled.div`
  display: flex;
  align-items: center;
  gap: 4px;
`;

const Checkbox = styled.input`
  appearance: none;
  display: grid;
  place-items: center;
  width: 20px;
  height: 20px;
  border: 1px solid #868786;

  &:checked {
    background: #868786;
  }

  &:checked::after {
    content: "";
    width: 9px;
    height: 5px;
    margin-bottom: 3px;
    border: solid #fff;
    border-width: 0 0 2px 2px;
    transform: rotate(-45deg);
  }
`;

const DisabledRow = styled(FormRow)`
  align-items: flex-start;
  padding-left: 5px;
  opacity: 0.5;
`;
